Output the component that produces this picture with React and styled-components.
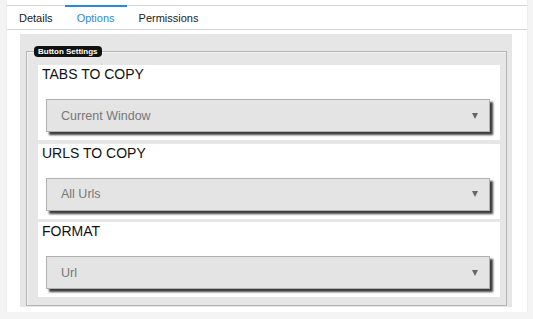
import styled, { createGlobalStyle } from 'styled-components';

const Global = createGlobalStyle`
  html, body {
    margin: 0;
    padding: 0;
    background: #f4f4f4;
    font-family: "Liberation Sans", Arial, sans-serif;
  }
`;

const Panel = styled.div`
  margin-left: 7px;
  width: 520px;
  height: 312px;
  background: #fff;
  box-shadow: 0 0 2px rgba(0, 0, 0, 0.08);
  box-sizing: border-box;
  padding-top: 5px;
  display: flex;
  flex-direction: column;
`;

const TabBar = styled.div`
  display: flex;
  height: 25px;
  border-top: 1px solid #d6d6d6;
  border-bottom: 1px solid #d6d6d6;
  box-sizing: border-box;
`;

const Tab = styled.div`
  padding: 0 12px;
  margin-top: -1px;
  border-top: 2px solid ${(p) => (p.$active ? '#2b8ad6' : 'transparent')};
  display: flex;
  align-items: center;
  font-size: 11px;
  color: ${(p) => (p.$active ? '#2b8ad6' : '#222')};
`;

const Content = styled.div`
  margin: 4px 15px 0 13px;
  background: #e6e6e6;
  height: 273px;
  box-sizing: border-box;
  padding: 12px 5px 0 6px;
`;

const Fieldset = styled.fieldset`
  margin: 0;
  border: 1px solid #b4b4b4;
  box-shadow: inset 1px 1px 0 #f4f4f4;
  padding: 8px 6px 8px 11px;
  display: flex;
  flex-direction: column;
  gap: 3.5px;
`;

const Legend = styled.legend`
  margin-left: -4px;
  padding: 0 4px;
  height: 11px;
  line-height: 11px;
  background: #111;
  color: #fff;
  border-radius: 4px;
  font-weight: bold;
  font-size: 8px;
`;

const Section = styled.div`
  background: #fff;
  height: 75px;
  box-sizing: border-box;
  padding: 0 10px 0 4px;
`;

const Label = styled.div`
  font-size: 14px;
  color: #111;
  height: 19px;
  line-height: 19px;
`;

const Select = styled.div`
  margin: 15px 0 0 4px;
  height: 33px;
  box-sizing: border-box;
  background: #e4e4e4;
  border: 1px solid #b0b0b0;
  box-shadow: 3px 3px 2px #3c3c3c;
  display: flex;
  align-items: center;
  justify-content: space-between;
  padding: 0 11px 0 14px;
  font-size: 12.5px;
  color: #777;

  &::after {
    content: '';
    border-left: 3.5px solid transparent;
    border-right: 3.5px solid transparent;
    border-top: 6px solid #666;
  }
`;

const fields = [
  { label: 'TABS TO COPY', value: 'Current Window' },
  { label: 'URLS TO COPY', value: 'All Urls' },
  { label: 'FORMAT', value: 'Url' },
];

export default function App() {
  return (
    <>
      <Global />
      <Panel>
        <TabBar>
          <Tab>Details</Tab>
          <Tab $active>Options</Tab>
          <Tab>Permissions</Tab>
        </TabBar>
        <Content>
          <Fieldset>
            <Legend>Button Settings</Legend>
            {fields.map((f) => (
              <Section key={f.label}>
                <Label>{f.label}</Label>
                <Select>{f.value}</Select>
              </Section>
            ))}
          </Fieldset>
        </Content>
      </Panel>
    </>
  );
}
